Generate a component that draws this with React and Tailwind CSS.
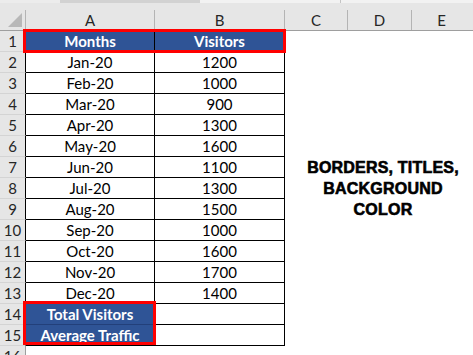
const months = ["Jan-20", "Feb-20", "Mar-20", "Apr-20", "May-20", "Jun-20", "Jul-20", "Aug-20", "Sep-20", "Oct-20", "Nov-20", "Dec-20"];
const visitors = [1200, 1000, 900, 1300, 1600, 1100, 1300, 1500, 1000, 1600, 1700, 1400];

// lines of the note that sits over C:E in rows 7-9
const note = { 7: "BORDERS, TITLES,", 8: "BACKGROUND", 9: "COLOR" };

function RowHead({ n, dark }) {
  return (
    <div
      className={`w-[26px] shrink-0 flex items-center justify-center bg-[#e6e6e6] border-b border-b-[#d4d4d4] border-r text-[15px] text-[#262626] ${
        dark ? "border-r-black" : "border-r-[#9e9e9e]"
      }`}
    >
      {n}
    </div>
  );
}

function Rest({ n }) {
  return (
    <div className="flex-1 flex items-center justify-center pl-[8px]">
      {note[n] && (
        <span className="font-['Liberation_Sans',Arial,sans-serif] font-bold text-[16px] tracking-[0.2px] text-black [-webkit-text-stroke:0.6px_black] whitespace-nowrap">
          {note[n]}
        </span>
      )}
    </div>
  );
}

export default function App() {
  return (
    <div className="w-[473px] h-[355px] overflow-hidden bg-white font-['Lato',sans-serif] text-[15px] text-black select-none">
      {/* strip left of the formula area */}
      <div className="h-[10px] bg-[#e6e6e6] flex items-start">
        <div className="h-[3px] w-[60px] bg-[#ececec]" />
        <div className="h-[3px] w-[140px] bg-[#d2d2d2]" />
        <div className="h-[3px] w-[141px] bg-[#f2f2f2] border-r border-r-[#c4c4c4]" />
        <div className="h-[3px] flex-1 bg-[#f2f2f2]" />
      </div>

      {/* column letters */}
      <div className="flex h-[21px] bg-[#e6e6e6] border-b border-b-[#9e9e9e] text-[#262626]">
        <div className="w-[26px] shrink-0 border-r border-r-[#b4b4b4] relative">
          <svg width="26" height="20" className="absolute inset-0">
            <polygon points="22,3 22,17 8,17" fill="#b8b8b8" />
          </svg>
        </div>
        <div className="w-[129px] shrink-0 border-r border-r-[#b4b4b4] flex items-center justify-center">A</div>
        <div className="w-[130px] shrink-0 border-r border-r-[#b4b4b4] flex items-center justify-center">B</div>
        <div className="w-[63px] shrink-0 border-r border-r-[#b4b4b4] flex items-center justify-center">C</div>
        <div className="w-[64px] shrink-0 border-r border-r-[#b4b4b4] flex items-center justify-center">D</div>
        <div className="flex-1 flex items-center justify-center pr-[2px]">E</div>
      </div>

      {/* row 1: titles */}
      <div className="flex h-[21px]">
        <RowHead n={1} dark />
        <div className="relative flex shrink-0">
          <div className="w-[129px] bg-[#2f5496] border-r border-b border-black flex items-center justify-center font-bold text-white">
            Months
          </div>
          <div className="w-[130px] bg-[#2f5496] border-r border-b border-black flex items-center justify-center font-bold text-white">
            Visitors
          </div>
          <div className="absolute -left-[3px] -right-[1px] -top-[2px] -bottom-[1px] border-[3px] border-[#ff0000] pointer-events-none" />
        </div>
        <Rest n={1} />
      </div>

      {/* rows 2-13: data */}
      {months.map((m, i) => (
        <div key={m} className="flex h-[21px]">
          <RowHead n={i + 2} dark />
          <div className="w-[129px] shrink-0 border-r border-b border-black flex items-center justify-center">{m}</div>
          <div className="w-[130px] shrink-0 border-r border-b border-black flex items-center justify-center">{visitors[i]}</div>
          <Rest n={i + 2} />
        </div>
      ))}

      {/* rows 14-15: summary labels */}
      <div className="flex">
        <div className="flex flex-col">
          <div className="flex h-[21px]"><RowHead n={14} dark /></div>
          <div className="flex h-[21px]"><RowHead n={15} dark /></div>
        </div>
        <div className="relative flex flex-col shrink-0">
          <div className="w-[129px] h-[21px] bg-[#2f5496] border-r border-r-black border-b border-b-[#23407a] flex items-center justify-center font-bold text-white">
            Total Visitors
          </div>
          <div className="w-[129px] h-[21px] bg-[#2f5496] border-r border-r-black border-b border-b-black flex items-center justify-center font-bold text-white whitespace-nowrap">
            Average Traffic
          </div>
          <div className="absolute -left-[3px] -right-[1px] -top-[3px] bottom-[1px] border-[3px] border-[#ff0000] pointer-events-none" />
        </div>
        <div className="flex flex-col">
          <div className="w-[130px] h-[21px] border-r border-b border-black" />
          <div className="w-[130px] h-[21px] border-r border-b border-black" />
        </div>
      </div>

      {/* row 16, cut off at the window edge */}
      <div className="flex h-[9px] overflow-hidden">
        <div className="w-[26px] shrink-0 bg-[#e6e6e6] border-r border-r-[#9e9e9e] flex justify-center pt-[3px] text-[15px] leading-[15px] text-[#262626]">
          16
        </div>
      </div>
    </div>
  );
}
